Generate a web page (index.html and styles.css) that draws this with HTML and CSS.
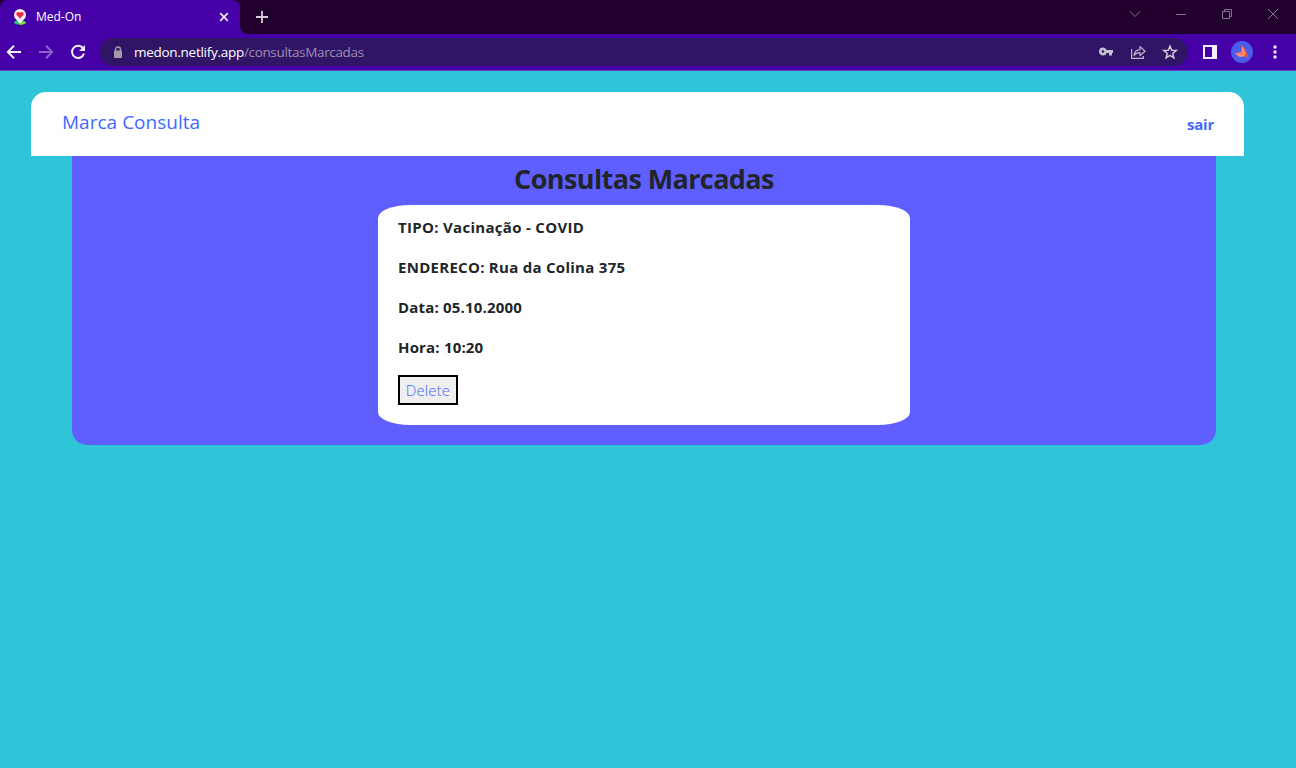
FILE: index.html
```html
<!DOCTYPE html>
<html lang="pt-BR">
<head>
<meta charset="utf-8">
<title>Med-On</title>
<link rel="stylesheet" href="styles.css">
</head>
<body>
<header class="browser">
  <div class="tabstrip">
    <div class="tab">
      <svg class="favicon" width="16" height="18" viewBox="0 0 16 18"><ellipse cx="8" cy="14.500" rx="6" ry="2.200" fill="#35c46a"/><path d="M8 14h5.800c0 1.800-2.500 2.700-5.800 2.700z" fill="#8ddc3c"/><path d="M8 1a6 6 0 0 0-6 6c0 4 4.200 5.500 6 9 1.800-3.500 6-5 6-9a6 6 0 0 0-6-6z" fill="#f3edf6"/><path d="M8 10.500 4.600 7.100C3.300 5.400 5.900 2.600 8 4.700c2.100-2.100 4.700.7 3.400 2.400z" fill="#f0283e"/></svg>
      <span class="tab-title">Med-On</span>
      <svg class="tab-close" width="10" height="10" viewBox="0 0 10 10" stroke="#eee8f6" stroke-width="1.700"><path d="M1.200 1.200l7.600 7.600M8.800 1.200L1.200 8.800"/></svg>
    </div>
    <svg class="flare" width="8" height="8" viewBox="0 0 8 8"><path d="M0 0a8 8 0 0 0 8 8H0z" fill="#4500a8"/></svg>
    <svg class="new-tab" width="12" height="12" viewBox="0 0 12 12" stroke="#d5cbd8" stroke-width="1.800"><path d="M6 0v12M0 6h12"/></svg>
    <div class="window-buttons">
      <svg width="12" height="12" viewBox="0 0 12 12"><path d="M1 3.500l5 5 5-5"/></svg>
      <svg width="12" height="12" viewBox="0 0 12 12"><path d="M1 6.500h10"/></svg>
      <svg width="12" height="12" viewBox="0 0 12 12"><path d="M1.500 3.500h7v7h-7zM3.500 3.500v-2h7v7h-2"/></svg>
      <svg width="12" height="12" viewBox="0 0 12 12"><path d="M1 1l10 10M11 1L1 11"/></svg>
    </div>
  </div>
  <div class="toolbar">
    <div class="nav">
      <svg width="16" height="16" viewBox="0 0 16 16"><path d="M15 8H2M8 1.700L1.800 8 8 14.300"/></svg>
      <svg class="dim" width="16" height="16" viewBox="0 0 16 16"><path d="M1 8h13M8 1.700L14.200 8 8 14.300"/></svg>
      <svg width="16" height="16" viewBox="0 0 16 16"><path d="M13.300 4.600A6.100 6.100 0 1 0 14 9.500"/><path d="M15 1v6H9z" fill="#f1ebfa" stroke="none"/></svg>
    </div>
    <div class="omnibox">
      <svg class="lock" width="10" height="13" viewBox="0 0 10 13"><path d="M2.500 5V3.500a2.500 2.500 0 0 1 5 0V5" fill="none" stroke="#a09da9" stroke-width="1.400"/><rect x="1" y="4.500" width="8" height="7.500" rx=".7" fill="#a09da9"/></svg>
      <span class="url"><span class="host">medon.netlify.app</span><span class="path">/consultasMarcadas</span></span>
      <div class="actions">
        <svg width="16" height="16" viewBox="0 0 16 16"><path fill-rule="evenodd" fill="#c4bfca" d="M5 3.500a4 4 0 1 0 3.700 5.500H11v2.500h3V9h1V6H8.700A4 4 0 0 0 5 3.500zm0 2.700a1.300 1.300 0 1 1 0 2.600 1.300 1.300 0 0 1 0-2.600z"/></svg>
        <svg width="16" height="16" viewBox="0 0 16 16" fill="none" stroke="#bdb8c4" stroke-width="1.200"><path d="M1.600 5v9.400h11.800V12"/><path d="M4 11.500c.4-3.800 2.500-5.600 6-5.800V2.600L15 7.300l-5 4.200V8.600C7.300 8.500 5.500 9.300 4 11.500z" stroke-linejoin="round"/></svg>
        <svg width="16" height="16" viewBox="0 0 16 16" fill="none" stroke="#cdc8d4" stroke-width="1.500"><path d="M8 2l1.700 4.200 4.500.3-3.500 2.900 1.200 4.400L8 11.300l-3.900 2.500 1.200-4.400-3.500-2.900 4.500-.3z"/></svg>
      </div>
    </div>
    <svg class="panel" width="14" height="14" viewBox="0 0 14 14"><path fill="#f4effc" fill-rule="evenodd" d="M0 0h14v14H0zM2 2v10h7V2z"/></svg>
    <svg class="avatar" width="22" height="22" viewBox="0 0 22 22"><circle cx="11" cy="11" r="11" fill="#4b5cea"/><path d="M11 4c2 2 5 7 6.500 13l-5-2.500z" fill="#e5533c"/><path d="M11 4l-.5 7.500 3.200 3.500.8-3z" fill="#ff8f70"/><path d="M4 12.500l7-2 3 4.700-3.500.5z" fill="#f4795a"/><path d="M4 12.500l9.500 2.500-5 .8z" fill="#ff9e86"/></svg>
    <svg class="menu" width="4" height="14" viewBox="0 0 4 14" fill="#f1ebfa"><circle cx="2" cy="2" r="1.700"/><circle cx="2" cy="7" r="1.700"/><circle cx="2" cy="12" r="1.700"/></svg>
  </div>
</header>
<main class="page">
  <nav class="topbar">
    <a class="brand">Marca Consulta</a>
    <a class="logout">sair</a>
  </nav>
  <section class="appointments">
    <h1 class="heading">Consultas Marcadas</h1>
    <article class="card">
      <p class="row type">TIPO: Vacinação - COVID</p>
      <p class="row address">ENDERECO: Rua da Colina 375</p>
      <p class="row">Data: 05.10.2000</p>
      <p class="row">Hora: 10:20</p>
      <button class="delete">Delete</button>
    </article>
  </section>
</main>
</body>
</html>
```
FILE: styles.css
```css
* { box-sizing: border-box; }
body { margin: 0; height: 768px; overflow: hidden; background: #30c4d9; font-family: "Open Sans", "Noto Sans", sans-serif; color: #212529; }
svg { display: block; flex: none; }
.browser { height: 71px; background: #4500a8; border-bottom: 1px solid #6a3bbd; }
.tabstrip { height: 34px; display: flex; background: #21002d; }
.tab { width: 240px; height: 34px; display: flex; align-items: center; padding: 0 11px 0 12px; background: #4500a8; border-radius: 8px 8px 0 0; }
.tab-title { flex: 1; margin: -1px 0 0 8px; font-size: 12px; color: #fff; }
.flare { align-self: flex-end; }
.new-tab { margin: 11px 0 0 8px; }
.window-buttons { display: flex; gap: 34px; margin: 8px 17px 0 auto; }
.window-buttons svg { fill: none; stroke: #86748b; stroke-width: 1; }
.toolbar { height: 36px; display: flex; align-items: center; padding: 0 19px 0 6px; }
.nav { width: 94px; display: flex; gap: 16px; }
.nav svg { fill: none; stroke: #f1ebfa; stroke-width: 2; }
.nav .dim { stroke: #8c62cb; }
.omnibox { width: 1088px; height: 28px; display: flex; align-items: center; padding: 0 10px 0 13px; background: #301466; border-radius: 14px; }
.url { margin-left: 11px; font-size: 13.5px; line-height: 28px; white-space: nowrap; }
.host { color: #fff; letter-spacing: -0.28px; }
.path { color: #9b8fb2; letter-spacing: -0.34px; }
.actions { display: flex; gap: 16px; margin-left: auto; }
.panel { margin-left: 15px; }
.avatar { margin-left: 14px; }
.menu { margin-left: 20px; }
.page { padding: 21px 52px 0 31px; }
.topbar { width: 1213px; height: 64px; display: flex; justify-content: space-between; align-items: center; padding: 0 30px 0 31px; background: #fff; border-radius: 15px 15px 0 0; color: #4169ff; }
.brand { font-size: 19px; letter-spacing: 0.02px; margin-top: -5px; }
.logout { font-size: 15px; font-weight: 700; letter-spacing: -0.2px; margin-top: -1px; }
.appointments { width: 1144px; height: 289px; margin-left: 41px; background: #5f5fff; border-radius: 0 0 15px 15px; display: flex; flex-direction: column; align-items: center; }
.heading { margin: 0; height: 49px; font-size: 27px; line-height: 45px; font-weight: 700; letter-spacing: -0.6px; white-space: nowrap; }
.card { width: 532px; height: 220px; padding: 10px 20px; background: #fff; border-radius: 32px / 13px; }
.row { margin: 0 0 16px; font-size: 15px; line-height: 24px; font-weight: 700; letter-spacing: 0.18px; white-space: nowrap; }
.type { letter-spacing: 0.3px; }
.address { letter-spacing: 0.28px; }
.delete { display: block; width: 60px; height: 30px; padding: 0; border: 2px solid #000; background: #efefef; color: #4169ff; font: 300 15px "Open Sans", "Noto Sans", sans-serif; letter-spacing: 0.1px; white-space: nowrap; }
```
